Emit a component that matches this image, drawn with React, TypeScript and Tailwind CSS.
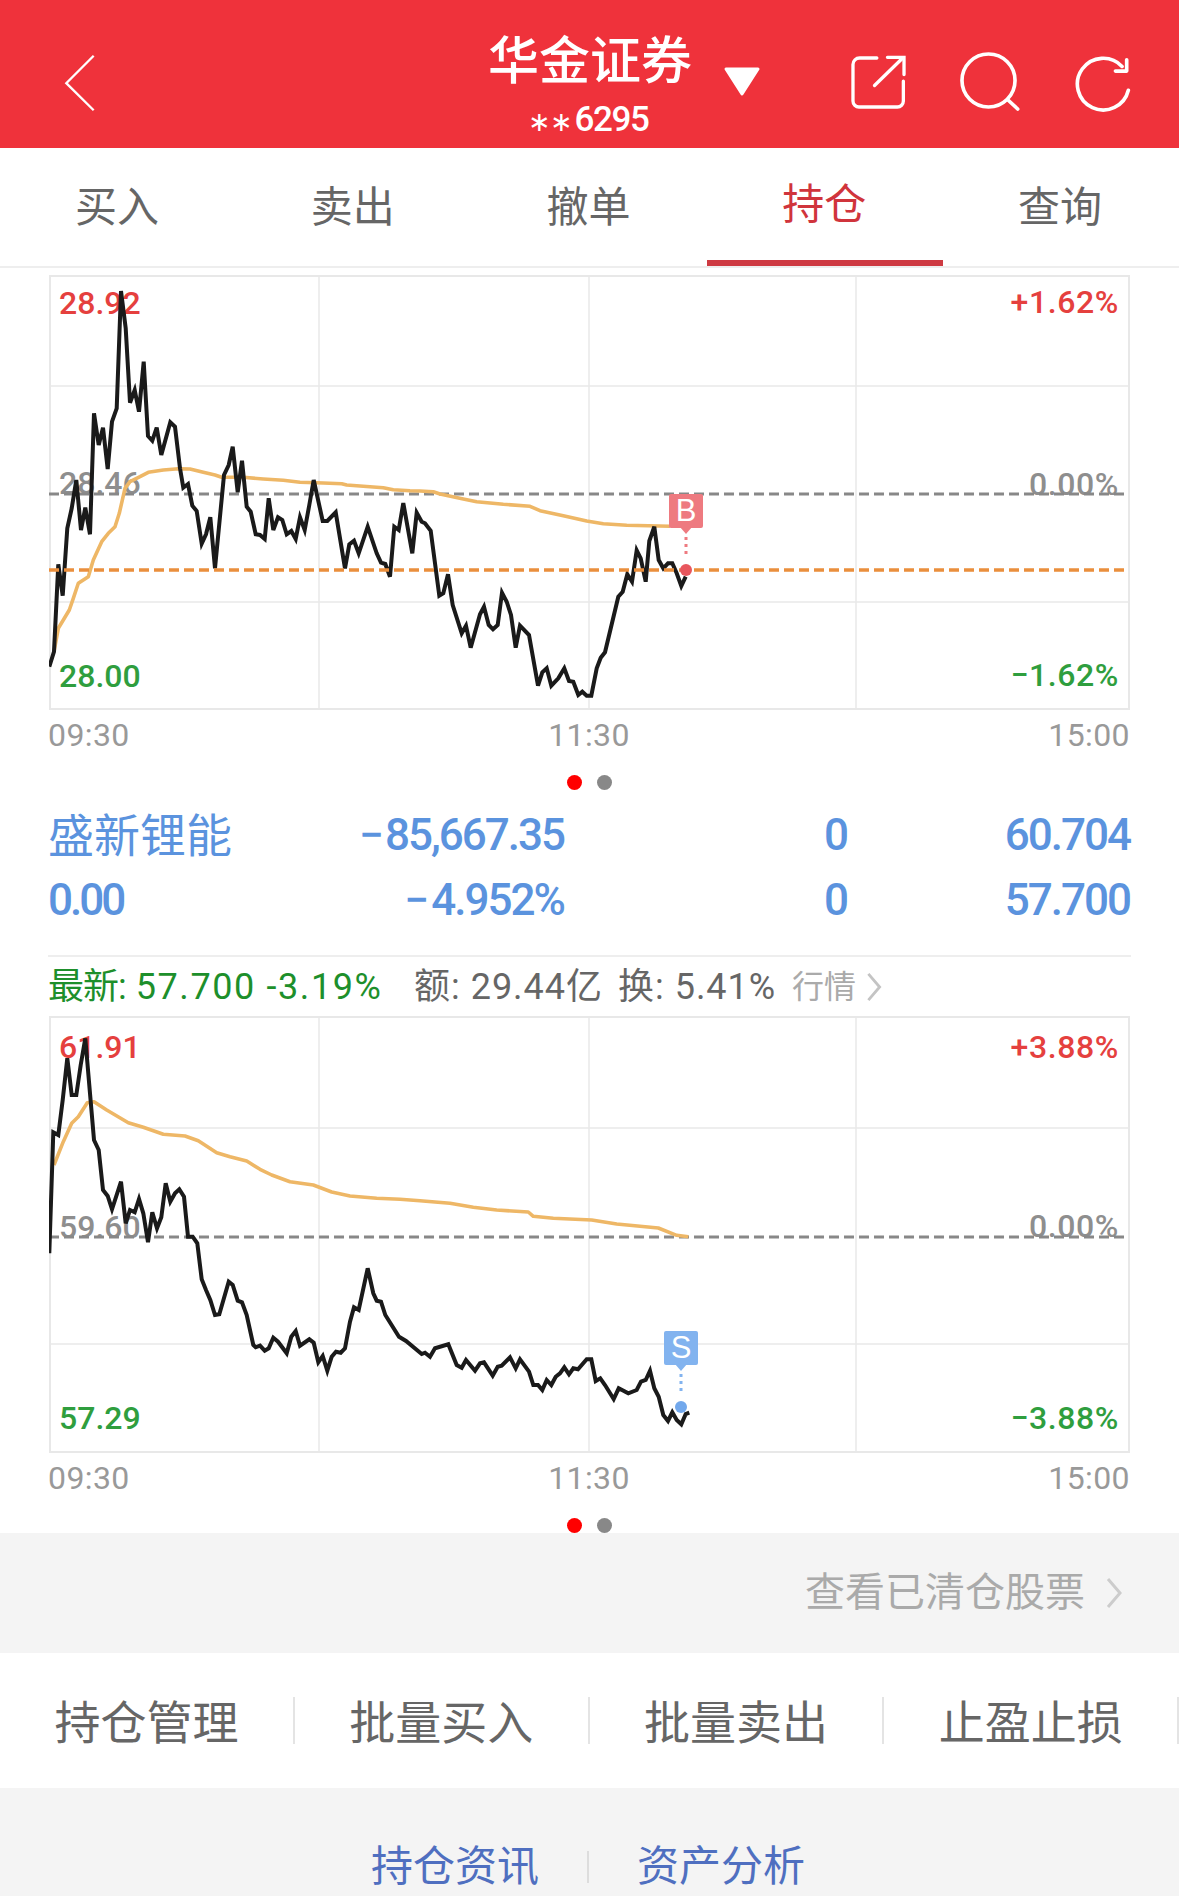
import type { ReactNode } from 'react';

type Pt = [number, number];

// points were read off at 3x, so they get mapped back to page coordinates
function toPath(left: Pt[], right: Pt[], originY: number) {
  const pts = [
    ...left.map(([x, y]) => [30 + x / 3, originY + y / 3]),
    ...right.map(([x, y]) => [420 + x / 3, originY + y / 3]),
  ];
  return 'M' + pts.map(([x, y]) => `${x.toFixed(1)} ${y.toFixed(1)}`).join('L');
}

const price1L: Pt[] = [[58,1205],[72,1160],[85,898],[98,992],[112,790],[125,730],[139,645],[153,795],[166,728],[180,808],[192,445],[206,540],[219,488],[233,612],[246,470],[260,430],[273,78],[287,190],[300,413],[314,375],[327,440],[341,290],[354,513],[367,527],[380,488],[394,570],[421,472],[435,485],[450,610],[460,668],[474,657],[487,722],[500,738],[515,836],[528,808],[541,757],[555,910],[582,630],[596,600],[608,545],[623,682],[636,587],[650,725],[662,740],[677,808],[690,810],[704,822],[716,700],[730,795],[744,757],[757,765],[770,808],[784,798],[797,822],[810,757],[824,795],[838,720],[851,645],[878,768],[892,768],[917,742],[945,910],[958,838],[972,827],[986,865],[1013,785],[1040,865],[1053,893],[1066,897],[1080,935],[1093,785],[1106,795],[1120,714],[1147,865],[1160,743],[1175,770]];
const price1R: Pt[] = [[15,775],[32,797],[58,992],[70,985],[84,928],[98,1020],[125,1105],[138,1082],[152,1148],[180,1048],[192,1025],[206,1080],[219,1093],[233,1080],[246,983],[260,1010],[273,1050],[287,1148],[300,1082],[327,1110],[354,1262],[367,1222],[380,1210],[394,1262],[415,1240],[433,1210],[447,1248],[460,1250],[475,1290],[487,1280],[500,1292],[514,1292],[530,1210],[542,1178],[555,1162],[595,995],[608,980],[622,928],[636,950],[650,856],[662,880],[677,950],[688,828],[703,785],[716,885],[730,910],[744,895],[757,895],[770,925],[784,963],[797,935]];
const avg1L: Pt[] = [[72,1160],[85,1090],[100,1065],[118,1035],[130,1000],[145,955],[175,935],[190,885],[215,830],[235,805],[255,785],[268,745],[285,670],[300,650],[330,635],[355,622],[400,615],[445,611],[480,612],[520,622],[555,630],[575,637],[640,637],[700,642],[760,646],[810,652],[880,654],[935,656],[950,660],[1000,664],[1060,668],[1090,674],[1140,677]];
const avg1R: Pt[] = [[0,678],[40,680],[60,687],[130,702],[170,710],[250,718],[330,724],[360,737],[430,752],[500,768],[550,776],[620,781],[750,784]];

const price2L: Pt[] = [[58,730],[70,367],[85,375],[98,270],[112,145],[125,255],[139,255],[152,165],[166,85],[180,250],[192,390],[206,420],[219,540],[233,558],[246,598],[273,515],[287,640],[300,600],[314,607],[327,567],[340,610],[354,697],[367,607],[381,655],[394,622],[407,520],[421,575],[435,550],[448,538],[462,560],[474,680],[488,680],[502,700],[515,808],[528,840],[541,870],[555,915],[568,913],[596,815],[608,825],[623,872],[636,877],[650,915],[670,1005],[677,1012],[690,1007],[704,1022],[716,1015],[730,983],[744,995],[770,1030],[784,980],[797,963],[810,1007],[838,988],[851,998],[865,1057],[878,1038],[892,1082],[905,1040],[918,1025],[932,1028],[945,1015],[960,935],[972,892],[986,900],[1013,775],[1030,850],[1040,872],[1053,875],[1066,915],[1107,980],[1128,993],[1175,1032]];
const price2R: Pt[] = [[15,1028],[30,1040],[45,1015],[85,1003],[110,1065],[125,1073],[138,1050],[165,1082],[180,1060],[192,1057],[218,1097],[233,1070],[245,1067],[270,1042],[287,1075],[300,1048],[327,1085],[340,1125],[354,1125],[367,1140],[380,1110],[394,1125],[407,1100],[420,1090],[433,1072],[447,1093],[460,1075],[474,1078],[500,1048],[514,1048],[527,1113],[541,1105],[555,1125],[581,1167],[596,1135],[625,1150],[650,1140],[663,1115],[677,1110],[690,1082],[703,1135],[716,1160],[730,1215],[744,1233],[757,1207],[770,1230],[784,1243],[797,1212],[808,1208]];
const avg2L: Pt[] = [[72,465],[100,395],[125,340],[145,320],[172,278],[192,275],[230,300],[295,338],[340,352],[400,373],[465,378],[505,392],[560,428],[600,440],[650,453],[690,478],[725,495],[780,515],[850,525],[905,546],[960,558],[1040,565],[1110,568]];
const avg2R: Pt[] = [[0,572],[90,580],[160,592],[230,600],[325,606],[340,619],[400,625],[515,630],[590,642],[715,654],[770,676],[805,680]];

const tabs = ['买入', '卖出', '撤单', '持仓', '查询'];
const actions = ['持仓管理', '批量买入', '批量卖出', '止盈止损'];

function Chevron({ className }: { className: string }) {
  return (
    <svg viewBox="0 0 16 32" className={className} fill="none" stroke="currentColor" strokeWidth="3">
      <path d="M2 2 L14 16 L2 30" />
    </svg>
  );
}

function Header() {
  return (
    <header className="h-[148px] bg-[#ef323b] flex items-start text-white">
      <svg viewBox="70 35 100 185" className="w-[33px] h-[62px] ml-[63px] mt-[52px]" fill="none" stroke="#fff" strokeWidth="7">
        <path d="M163 45 L80 128 L163 210" />
      </svg>
      <div className="w-[204px] ml-[392px] mt-[30px] flex flex-col items-center">
        <div className="text-[51px] leading-[64px] font-medium whitespace-nowrap">华金证券</div>
        <div className="text-[35px] leading-[40px] mt-[6px] font-medium tracking-[-1.4px] pr-[3px]">
          <span className="text-[27px] mr-[3px]">∗∗</span>6295
        </div>
      </div>
      <svg viewBox="0 0 38 30" className="w-[38px] h-[30px] ml-[31px] mt-[67px]" fill="#fff" stroke="#fff" strokeWidth="3" strokeLinejoin="round">
        <path d="M3 2 H35 L19 27 Z" />
      </svg>
      <svg viewBox="60 40 170 175" className="w-[57px] h-[58px] ml-[89px] mt-[53px]" fill="none" stroke="#fff" strokeWidth="10" strokeLinecap="round">
        <path d="M140 55 H88 a20 20 0 0 0 -20 20 V185 a18 18 0 0 0 18 18 H202 a18 18 0 0 0 18 -18 V125" />
        <path d="M133 138 L218 55" />
        <path d="M172 53 H222 V105" />
      </svg>
      <svg viewBox="385 30 190 190" className="w-[63px] h-[63px] ml-[51px] mt-[50px]" fill="none" stroke="#fff" strokeWidth="11" strokeLinecap="round">
        <circle cx="477" cy="122" r="80" />
        <path d="M535 180 L565 208" />
      </svg>
      <svg viewBox="730 35 175 180" className="w-[58px] h-[60px] ml-[52px] mt-[52px]" fill="none" stroke="#fff" strokeWidth="11" strokeLinecap="round">
        <path d="M897 150 A78 78 0 1 1 878 78" />
        <path d="M892 58 V92 H858" strokeLinejoin="round" />
      </svg>
    </header>
  );
}

function Tabs() {
  return (
    <nav className="h-[120px] grid grid-cols-5 border-b-2 border-[#eeeeee]">
      {tabs.map((tab, i) => (
        <div key={tab} className={`relative flex justify-center pr-[2px] ${i === 3 ? 'text-[#d0343c] pt-[32px]' : 'text-[#666666] pt-[35px]'}`}>
          <span className="text-[42px] leading-[50px]">{tab}</span>
          {i === 3 && <span className="absolute left-0 right-0 bottom-0 h-[6px] bg-[#ce3a42]" />}
        </div>
      ))}
    </nav>
  );
}

interface ChartProps {
  top: number;
  height: number;
  hLines: number[];
  midY: number;
  price: string;
  avg: string;
  marker: ReactNode;
  children: ReactNode;
  heightClass: string;
  marginClass: string;
}

function Chart({ top, height, hLines, midY, price, avg, marker, children, heightClass, marginClass }: ChartProps) {
  return (
    <div className={`relative mx-[49px] text-[32px] leading-[32px] font-medium ${heightClass} ${marginClass}`}>
      {children}
      <svg viewBox={`49 ${top} 1081 ${height}`} className="absolute inset-0 w-full h-full" fill="none">
        <rect x="50" y={top + 1} width="1079" height={height - 2} stroke="#e8e8e8" strokeWidth="2" />
        {hLines.map((y) => (
          <path key={y} d={`M50 ${y} H1129`} stroke="#e8e8e8" strokeWidth="1.5" />
        ))}
        {[319, 589, 856].map((x) => (
          <path key={x} d={`M${x} ${top + 1} V${top + height - 1}`} stroke="#e8e8e8" strokeWidth="1.5" />
        ))}
        <path d={`M49 ${midY} H1124`} stroke="#888888" strokeWidth="3" strokeDasharray="10 5" />
        <path d={avg} stroke="#eeb766" strokeWidth="3.6" strokeLinejoin="round" />
        <path d={price} stroke="#1a1a1a" strokeWidth="4" strokeLinejoin="miter" />
        {marker}
      </svg>
    </div>
  );
}

function TimeAxis({ className }: { className: string }) {
  return (
    <div className={`ml-[48px] mr-[49px] flex justify-between text-[32px] leading-[32px] tracking-[0.4px] text-[#999999] ${className}`}>
      <span>09:30</span>
      <span>11:30</span>
      <span>15:00</span>
    </div>
  );
}

function PageDots() {
  return (
    <div className="mt-[24px] flex justify-center gap-[15px]">
      <span className="w-[15px] h-[15px] rounded-full bg-[#ff0000]" />
      <span className="w-[15px] h-[15px] rounded-full bg-[#888888]" />
    </div>
  );
}

function Holding() {
  const row = 'grid grid-cols-[190px_326px_281px_1fr] h-[60px] items-center text-[44px] leading-[60px] font-medium tracking-[-2px] text-[#5b93de]';
  return (
    <div className="ml-[48px] mr-[49px] mt-[13px]">
      <div className={row}>
        <span className="tracking-normal font-normal text-[46px] mt-[3px] whitespace-nowrap">盛新锂能</span>
        <span className="text-right"><span className="mr-[3px]">−</span>85,667.35</span>
        <span className="text-right mr-[-2px]">0</span>
        <span className="text-right">60.704</span>
      </div>
      <div className={`${row} mt-[7px]`}>
        <span className="tracking-[-3px]">0.00</span>
        <span className="text-right"><span className="mr-[4px]">−</span>4.952%</span>
        <span className="text-right mr-[-2px]">0</span>
        <span className="text-right">57.700</span>
      </div>
    </div>
  );
}

function QuoteLine() {
  return (
    <div className="ml-[48px] mt-[10px] h-[40px] flex items-center text-[36px] leading-[40px] tracking-[1px] whitespace-nowrap">
      <span className="text-[#1d8f2b] w-[366px]">
        <span className="tracking-[-1px]">最新:</span> <span className="tracking-[1.6px]">57.700 -3.19%</span>
      </span>
      <span className="text-[#666666] w-[204px]">额: 29.44亿</span>
      <span className="text-[#666666] w-[174px]">换: 5.41%</span>
      <span className="text-[#aaaaaa] text-[32px] tracking-normal">行情</span>
      <Chevron className="w-[16px] h-[30px] ml-[10px] text-[#c4c4c4]" />
    </div>
  );
}

export default function App() {
  return (
    <div className="w-[1179px] h-[1896px] overflow-hidden bg-white font-[Roboto,'Noto_Sans_CJK_SC',sans-serif]">
      <Header />
      <Tabs />

      <Chart
        top={275}
        height={435}
        hLines={[386, 602]}
        midY={494}
        price={toPath(price1L, price1R, 265)}
        avg={toPath(avg1L, avg1R, 265)}
        heightClass="h-[435px]"
        marginClass="mt-[7px]"
        marker={
          <>
            <path d="M49 570 H1129" stroke="#ea8f3d" strokeWidth="3.6" strokeDasharray="10 5" />
            <path d="M680 527 H692 L686 534 Z" fill="#ee7a80" />
            <path d="M686 537 V558" stroke="#ee7a80" strokeWidth="3" strokeDasharray="3 4" />
            <circle cx="686" cy="570" r="6" fill="#e8565d" />
          </>
        }
      >
        <span className="absolute left-[10px] top-[12px] text-[#e5403e]">28.92</span>
        <span className="absolute left-[10px] top-[192px] text-[#8e8e8e]">28.46</span>
        <span className="absolute left-[10px] top-[385px] text-[#2f9e3e]">28.00</span>
        <span className="absolute right-[11px] top-[11px] text-[#e5403e] tracking-[0.6px]">+1.62%</span>
        <span className="absolute right-[11px] top-[193px] text-[#8e8e8e] tracking-[0.6px]">0.00%</span>
        <span className="absolute right-[11px] top-[384px] text-[#2f9e3e] tracking-[0.6px]">−1.62%</span>
        <span className="absolute z-10 left-[620px] top-[219px] w-[34px] h-[34px] rounded-[2px] bg-[#ee7a80] text-white text-[31px] leading-[34px] text-center font-normal font-['Liberation_Sans',sans-serif]">B</span>
      </Chart>
      <TimeAxis className="mt-[9px]" />
      <PageDots />

      <Holding />
      <div className="mx-[48px] mt-[25px] h-[2px] bg-[#eeeeee]" />
      <QuoteLine />

      <Chart
        top={1016}
        height={437}
        hLines={[1128, 1344]}
        midY={1237}
        price={toPath(price2L, price2R, 1010)}
        avg={toPath(avg2L, avg2R, 1010)}
        heightClass="h-[437px]"
        marginClass="mt-[9px]"
        marker={
          <>
            <path d="M675 1364 H687 L681 1371 Z" fill="#82b3ef" />
            <path d="M681 1374 V1394" stroke="#82b3ef" strokeWidth="3" strokeDasharray="3 4" />
            <circle cx="681" cy="1407" r="6" fill="#72a8ec" />
          </>
        }
      >
        <span className="absolute left-[10px] top-[15px] text-[#e5403e]">61.91</span>
        <span className="absolute left-[10px] top-[195px] text-[#8e8e8e]">59.60</span>
        <span className="absolute left-[10px] top-[386px] text-[#2f9e3e]">57.29</span>
        <span className="absolute right-[11px] top-[15px] text-[#e5403e] tracking-[0.6px]">+3.88%</span>
        <span className="absolute right-[11px] top-[194px] text-[#8e8e8e] tracking-[0.6px]">0.00%</span>
        <span className="absolute right-[11px] top-[386px] text-[#2f9e3e] tracking-[0.6px]">−3.88%</span>
        <span className="absolute z-10 left-[615px] top-[315px] w-[34px] h-[34px] rounded-[2px] bg-[#82b3ef] text-white text-[31px] leading-[34px] text-center font-normal font-['Liberation_Sans',sans-serif]">S</span>
      </Chart>
      <TimeAxis className="mt-[9px]" />
      <PageDots />

      <div className="h-[120px] bg-[#f4f4f4] flex items-center justify-end pr-[57px] text-[#aaaaaa]">
        <span className="text-[40px] leading-[50px]">查看已清仓股票</span>
        <Chevron className="w-[16px] h-[32px] ml-[21px] text-[#cccccc]" />
      </div>

      <div className="h-[135px] grid grid-cols-4 items-center">
        {actions.map((label) => (
          <div key={label} className="h-[47px] flex items-center justify-center border-r-2 border-[#e4e4e4] whitespace-nowrap">
            <span className="text-[46px] leading-[50px] mt-[5px] text-[#666666]">{label}</span>
          </div>
        ))}
      </div>

      <div className="h-[108px] bg-[#f4f4f4] flex items-center justify-center pt-[50px] pr-[2px] text-[42px] leading-[50px] text-[#4f6fc0]">
        <span className="w-[168px]">持仓资讯</span>
        <span className="w-[2px] h-[32px] bg-[#dddddd] mx-[48px]" />
        <span className="w-[169px]">资产分析</span>
      </div>
    </div>
  );
}
